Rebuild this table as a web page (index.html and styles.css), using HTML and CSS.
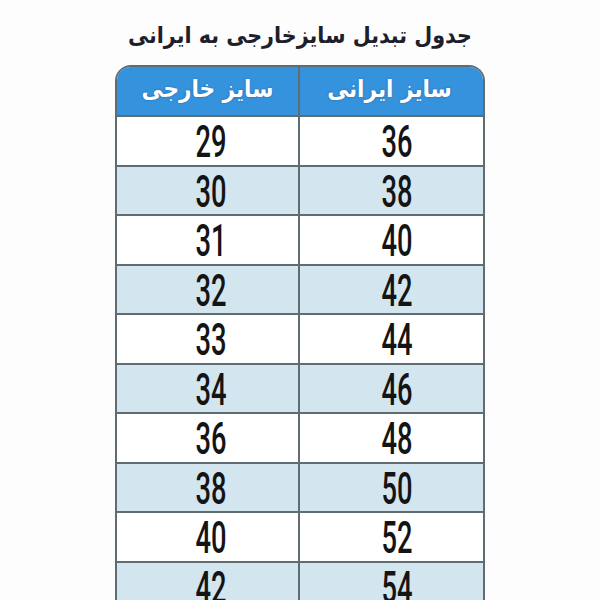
FILE: index.html
```html
<!DOCTYPE html>
<html lang="fa">
<head>
<meta charset="utf-8">
<link rel="stylesheet" href="styles.css">
</head>
<body>
<div class="page">
  <h1 class="title">جدول تبدیل سایزخارجی به ایرانی</h1>
  <div class="table">
    <div class="row head">
      <div class="cell">سایز ایرانی</div>
      <div class="cell">سایز خارجی</div>
    </div>
    <div class="row"><div class="cell"><span class="num">36</span></div><div class="cell"><span class="num">29</span></div></div>
    <div class="row alt"><div class="cell"><span class="num">38</span></div><div class="cell"><span class="num">30</span></div></div>
    <div class="row"><div class="cell"><span class="num">40</span></div><div class="cell"><span class="num">31</span></div></div>
    <div class="row alt"><div class="cell"><span class="num">42</span></div><div class="cell"><span class="num">32</span></div></div>
    <div class="row"><div class="cell"><span class="num">44</span></div><div class="cell"><span class="num">33</span></div></div>
    <div class="row alt"><div class="cell"><span class="num">46</span></div><div class="cell"><span class="num">34</span></div></div>
    <div class="row"><div class="cell"><span class="num">48</span></div><div class="cell"><span class="num">36</span></div></div>
    <div class="row alt"><div class="cell"><span class="num">50</span></div><div class="cell"><span class="num">38</span></div></div>
    <div class="row"><div class="cell"><span class="num">52</span></div><div class="cell"><span class="num">40</span></div></div>
    <div class="row alt"><div class="cell"><span class="num">54</span></div><div class="cell"><span class="num">42</span></div></div>
  </div>
</div>
</body>
</html>
```
FILE: styles.css
```css
html, body {
  margin: 0;
  padding: 0;
  background: #fdfdfd;
  height: 600px;
  overflow: hidden;
}
.page {
  width: 600px;
  display: flex;
  flex-direction: column;
  align-items: center;
}
.title {
  margin: 0;
  height: 65px;
  display: flex;
  align-items: center;
  justify-content: center;
  font-family: "DejaVu Sans Condensed", "DejaVu Sans", sans-serif;
  font-weight: 700;
  font-size: 23px;
  color: #1d1f2b;
  direction: rtl;
  padding-top: 4px;
  box-sizing: border-box;
}
.table {
  width: 370px;
  border: 2px solid #5f6d73;
  border-bottom: none;
  border-radius: 16px 16px 0 0;
  overflow: hidden;
  direction: rtl;
  box-sizing: border-box;
}
.row {
  display: grid;
  grid-template-columns: 183px 1fr;
  height: 49.5px;
  border-top: 2px solid #5f6d73;
  background: #ffffff;
  box-sizing: border-box;
}
.row.head {
  border-top: none;
  height: 48px;
  background: #3592dc;
}
.row.alt {
  background: #d3e5ee;
}
.cell {
  display: flex;
  align-items: center;
  justify-content: center;
}
.cell + .cell {
  border-right: 2px solid #5f6d73;
}
.head .cell {
  font-family: "DejaVu Sans Condensed", "DejaVu Sans", sans-serif;
  font-weight: 700;
  font-size: 24px;
  color: #ffffff;
  text-shadow: 0 0 2px rgba(20, 60, 110, 0.5);
  padding-bottom: 4px;
}
.head .cell:first-child {
  padding-right: 4px;
}
.num {
  display: inline-block;
  font-family: Roboto, "Liberation Sans", sans-serif;
  font-weight: 500;
  font-size: 44px;
  line-height: 1;
  color: #141414;
  transform: scaleX(0.62);
  direction: ltr;
  margin-top: 3px;
}
.row .cell:first-child .num {
  margin-left: 10px;
}
.row .cell + .cell .num {
  margin-left: 6px;
}
```
